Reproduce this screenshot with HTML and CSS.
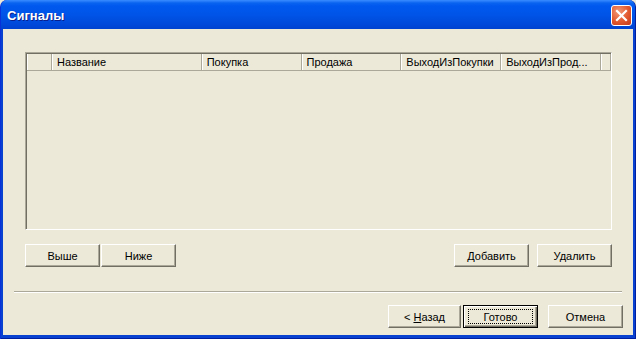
FILE: index.html
```html
<!DOCTYPE html>
<html>
<head>
<meta charset="utf-8">
<link rel="stylesheet" href="styles.css">
</head>
<body>
<div class="window">
  <div class="titlebar">
    <span class="title">Сигналы</span>
    <span class="close">
      <svg width="13" height="13" viewBox="0 0 13 13"><path d="M2 2 L11 11 M11 2 L2 11" stroke="#fff" stroke-width="2.2" stroke-linecap="square"/></svg>
    </span>
  </div>
  <div class="client">
    <div class="listview">
      <div class="header">
        <div class="hcell c0"></div>
        <div class="hcell c1">Название</div>
        <div class="hcell c2">Покупка</div>
        <div class="hcell c2">Продажа</div>
        <div class="hcell c2">ВыходИзПокупки</div>
        <div class="hcell c2">ВыходИзПрод...</div>
        <div class="hcell cend"></div>
      </div>
    </div>
    <div class="row">
      <div class="group tight">
        <button class="btn">Выше</button>
        <button class="btn">Ниже</button>
      </div>
      <div class="group wide">
        <button class="btn">Добавить</button>
        <button class="btn">Удалить</button>
      </div>
    </div>
    <div class="sep"></div>
    <div class="footer">
      <button class="btn back"><span>&lt; <u>Н</u>азад</span></button>
      <button class="btn default"><span class="focus">Готово</span></button>
      <button class="btn cancel">Отмена</button>
    </div>
  </div>
</div>
</body>
</html>
```
FILE: styles.css
```css
html, body {
  margin: 0;
  padding: 0;
  background: #ECE9D8;
}
.window {
  width: 636px;
  height: 339px;
  box-sizing: border-box;
  background: #0841D0;
  display: flex;
  flex-direction: column;
  padding: 0 2px 4px 2px;
  border-left: 1px solid #0831D9;
  border-right: 1px solid #001EA0;
  border-radius: 7px 7px 0 0;
  overflow: hidden;
  font-family: "Liberation Sans", Arial, sans-serif;
  font-size: 11px;
  color: #000;
  box-shadow: inset 0 -1px 0 #001EA0;
}
.titlebar {
  height: 29px;
  margin: 0 -3px;
  padding: 0 4px 0 7px;
  display: flex;
  align-items: center;
  justify-content: space-between;
  background: linear-gradient(to bottom, #3A8CFF 0px, #0A64F0 3px, #0058EE 6px, #0055E8 14px, #0049DA 24px, #0042D0 29px);
}
.title {
  color: #fff;
  font-weight: bold;
  font-size: 13px;
  text-shadow: 1px 1px 0 #0A1E8C;
  margin-top: 1px;
}
.close {
  width: 19px;
  height: 19px;
  border: 1px solid #fff;
  border-radius: 3px;
  background: radial-gradient(circle at 35% 30%, #F19A78 0%, #E2582E 55%, #C4381A 100%);
  display: flex;
  align-items: center;
  justify-content: center;
  margin-top: 1px;
}
.client {
  flex: 1;
  background: #ECE9D8;
  display: flex;
  flex-direction: column;
  padding: 23px 0 0 0;
}
.listview {
  margin: 0 21px 0 22px;
  height: 178px;
  box-sizing: border-box;
  border-top: 1px solid #ACA899;
  border-left: 1px solid #ACA899;
  border-right: 1px solid #fff;
  border-bottom: 1px solid #fff;
  box-shadow: inset 1px 1px 0 #716F64;
}
.header {
  display: flex;
  height: 17px;
  margin: 1px 0 0 1px;
}
.hcell {
  box-sizing: border-box;
  height: 17px;
  border-right: 1px solid #ACA899;
  box-shadow: inset 1px 0 0 #fff;
  padding: 2px 0 0 5px;
  line-height: 13px;
  white-space: nowrap;
  overflow: hidden;
  border-bottom: 1px solid #ACA899;
}
.c0 { width: 25px; }
.c1 { width: 150px; }
.c2 { width: 100px; }
.cend { width: 10px; }
.row {
  display: flex;
  justify-content: space-between;
  margin: 14px 21px 0 22px;
}
.group { display: flex; }
.tight { gap: 1px; }
.wide { gap: 8px; }
.btn {
  width: 75px;
  height: 23px;
  box-sizing: border-box;
  font-family: "Liberation Sans", Arial, sans-serif;
  font-size: 11px;
  color: #000;
  background: #ECE9D8;
  border-top: 1px solid #fff;
  border-left: 1px solid #fff;
  border-right: 1px solid #716F64;
  border-bottom: 1px solid #716F64;
  box-shadow: inset -1px -1px 0 #ACA899;
  padding: 0;
  display: flex;
  align-items: center;
  justify-content: center;
}
.sep {
  margin: 24px 11px 0 11px;
  height: 1px;
  background: #ACA899;
  border-bottom: 1px solid #fff;
}
.footer {
  display: flex;
  justify-content: flex-end;
  margin: 12px 10px 0 0;
}
.back { width: 73px; margin-right: 2px; }
.default {
  border: 1px solid #000;
  box-shadow: inset 1px 1px 0 #fff, inset -1px -1px 0 #716F64, inset -2px -2px 0 #ACA899;
  margin-right: 10px;
}
.focus {
  display: flex;
  align-items: center;
  justify-content: center;
  width: 65px;
  height: 15px;
  box-sizing: border-box;
  border: 1px dotted #000;
}
u { text-decoration: underline; }
```
